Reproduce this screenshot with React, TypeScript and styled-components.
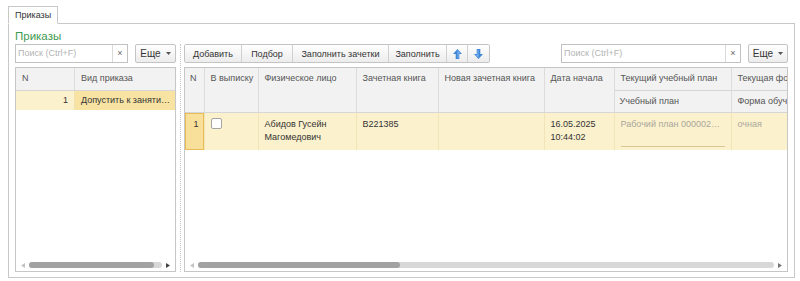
import styled, { createGlobalStyle } from 'styled-components'

const GlobalStyle = createGlobalStyle`
  body {
    margin: 0;
    background: #ffffff;
    font-family: 'Liberation Sans', Arial, sans-serif;
    font-size: 9px;
    color: #333333;
  }
`

type Column = { title: string; sub?: string; width: number }

const columns: Column[] = [
  { title: 'N', width: 19 },
  { title: 'В выписку', width: 54 },
  { title: 'Физическое лицо', width: 98 },
  { title: 'Зачетная книга', width: 82 },
  { title: 'Новая зачетная книга', width: 106 },
  { title: 'Дата начала', width: 70 },
  { title: 'Текущий учебный план', sub: 'Учебный план', width: 117 },
  { title: 'Текущая форма обучения', sub: 'Форма обучения', width: 110 }
]

function Caret() {
  return (
    <svg width="5" height="3" viewBox="0 0 5 3">
      <path d="M0 0h5L2.5 3z" fill="#555" />
    </svg>
  )
}

function MoveArrow({ down }: { down?: boolean }) {
  return (
    <svg
      width="9"
      height="10"
      viewBox="0 0 9 10"
      style={down ? { transform: 'rotate(180deg)' } : undefined}
    >
      <path d="M4.5 0L9 5H6.3V10H2.7V5H0z" fill="#3d86d8" />
      <path d="M4.5 1.2L7.3 4.3H5.6V9.2H4.5z" fill="#7fb4ee" />
    </svg>
  )
}

function SearchBox({ width }: { width: number }) {
  return (
    <Search $width={width}>
      <SearchText>Поиск (Ctrl+F)</SearchText>
      <SearchClear>×</SearchClear>
    </Search>
  )
}

function MoreButton({ width }: { width: number }) {
  return (
    <More $width={width}>
      Еще
      <Caret />
    </More>
  )
}

function ScrollBar({ thumb, rightDark }: { thumb: string; rightDark?: boolean }) {
  return (
    <Scroll>
      <svg width="4" height="5" viewBox="0 0 4 5">
        <path d="M4 0v5L0 2.5z" fill="#c4c4c4" />
      </svg>
      <Track>
        <Thumb style={{ width: thumb }} />
      </Track>
      <svg width="4" height="5" viewBox="0 0 4 5">
        <path d="M0 0v5L4 2.5z" fill={rightDark ? '#444' : '#777'} />
      </svg>
    </Scroll>
  )
}

export default function App() {
  return (
    <Page>
      <GlobalStyle />
      <TabBar>
        <Tab>Приказы</Tab>
      </TabBar>
      <Panel>
        <Title>Приказы</Title>
        <Split>
          <LeftPane>
            <Toolbar>
              <SearchBox width={113} />
              <MoreButton width={41} />
            </Toolbar>
            <Grid>
              <LeftHead>
                <HeadCell>N</HeadCell>
                <HeadCell $last>Вид приказа</HeadCell>
              </LeftHead>
              <LeftRow>
                <NumCell>1</NumCell>
                <KindCell>Допустить к занятиям</KindCell>
              </LeftRow>
              <Filler />
              <ScrollBar thumb="94%" rightDark />
            </Grid>
          </LeftPane>
          <Divider />
          <RightPane>
            <Toolbar>
              <ButtonGroup>
                <GroupButton $width={56}>Добавить</GroupButton>
                <GroupButton $width={51}>Подбор</GroupButton>
                <GroupButton $width={96}>Заполнить зачетки</GroupButton>
                <GroupButton $width={58}>Заполнить</GroupButton>
                <GroupButton $width={21}>
                  <MoveArrow />
                </GroupButton>
                <GroupButton $width={22}>
                  <MoveArrow down />
                </GroupButton>
              </ButtonGroup>
              <Spacer />
              <SearchBox width={180} />
              <MoreButton width={40} />
            </Toolbar>
            <Grid>
              <TableClip>
                <Table>
                  <colgroup>
                    {columns.map((c) => (
                      <col key={c.title} style={{ width: c.width }} />
                    ))}
                  </colgroup>
                  <thead>
                    <tr>
                      {columns.map((c) => (
                        <Th key={c.title} rowSpan={c.sub ? 1 : 2} $tall={!c.sub}>
                          {c.title}
                        </Th>
                      ))}
                    </tr>
                    <tr>
                      {columns
                        .filter((c) => c.sub)
                        .map((c) => (
                          <Th key={c.title} $tall={false}>
                            {c.sub}
                          </Th>
                        ))}
                    </tr>
                  </thead>
                  <tbody>
                    <tr>
                      <NumTd>1</NumTd>
                      <Td>
                        <Check />
                      </Td>
                      <Td>
                        Абидов Гусейн
                        <br />
                        Магомедович
                      </Td>
                      <Td>В221385</Td>
                      <Td />
                      <Td>
                        16.05.2025
                        <br />
                        10:44:02
                      </Td>
                      <Td>
                        <Field>Рабочий план 000002345678</Field>
                      </Td>
                      <Td>
                        <Muted>очная</Muted>
                      </Td>
                    </tr>
                  </tbody>
                </Table>
              </TableClip>
              <ScrollBar thumb="35%" />
            </Grid>
          </RightPane>
        </Split>
      </Panel>
    </Page>
  )
}

const Page = styled.div`
  width: 787px;
  padding: 6px 5px 0 8px;
`

const TabBar = styled.div`
  display: flex;
  height: 18px;
`

const Tab = styled.div`
  position: relative;
  z-index: 1;
  height: 18px;
  padding: 0 6px;
  line-height: 17px;
  border: 1px solid #c8c8c8;
  border-bottom: 1px solid #ffffff;
  background: #ffffff;
  box-sizing: border-box;
  color: #333;
`

const Panel = styled.div`
  box-sizing: border-box;
  height: 255px;
  margin-top: -1px;
  border: 1px solid #c8c8c8;
  padding: 5px 6px 5px 6px;
  display: flex;
  flex-direction: column;
`

const Title = styled.div`
  height: 14px;
  line-height: 14px;
  font-size: 11.5px;
  color: #3f9b52;
`

const Split = styled.div`
  flex: 1;
  margin-top: 1px;
  display: flex;
  min-height: 0;
`

const LeftPane = styled.div`
  width: 161px;
  display: flex;
  flex-direction: column;
  gap: 4px;
`

const Divider = styled.div`
  width: 8px;
  display: flex;
  justify-content: center;
  &::after {
    content: '';
    border-left: 1px dotted #c4c4c4;
  }
`

const RightPane = styled.div`
  flex: 1;
  min-width: 0;
  display: flex;
  flex-direction: column;
  gap: 4px;
`

const Toolbar = styled.div`
  height: 19px;
  display: flex;
  gap: 7px;
`

const Spacer = styled.div`
  flex: 1;
`

const Search = styled.div<{ $width: number }>`
  box-sizing: border-box;
  width: ${(p) => p.$width}px;
  height: 19px;
  display: flex;
  border: 1px solid #c2c2c2;
  background: #ffffff;
`

const SearchText = styled.div`
  flex: 1;
  padding-left: 2px;
  line-height: 17px;
  color: #b4b4b4;
`

const SearchClear = styled.div`
  width: 14px;
  border-left: 1px solid #dadada;
  text-align: center;
  line-height: 16px;
  color: #666;
`

const buttonFace = `
  box-sizing: border-box;
  height: 19px;
  display: flex;
  align-items: center;
  justify-content: center;
  background: linear-gradient(#ffffff, #ececec);
  color: #333;
`

const More = styled.div<{ $width: number }>`
  ${buttonFace}
  width: ${(p) => p.$width}px;
  gap: 5px;
  border: 1px solid #c4c4c4;
  border-radius: 2px;
  font-size: 10px;
`

const ButtonGroup = styled.div`
  display: flex;
  border: 1px solid #c4c4c4;
  border-radius: 2px;
  box-sizing: border-box;
  height: 19px;
  overflow: hidden;
`

const GroupButton = styled.div<{ $width: number }>`
  ${buttonFace}
  height: 17px;
  width: ${(p) => p.$width}px;
  & + & {
    border-left: 1px solid #d0d0d0;
  }
`

const Grid = styled.div`
  flex: 1;
  min-height: 0;
  box-sizing: border-box;
  border: 1px solid #c6c6c6;
  display: flex;
  flex-direction: column;
  overflow: hidden;
`

const LeftHead = styled.div`
  display: grid;
  grid-template-columns: 59px 1fr;
  height: 22px;
  background: #f2f2f2;
  border-bottom: 1px solid #d6d6d6;
`

const HeadCell = styled.div<{ $last?: boolean }>`
  padding: 5px 6px 0;
  color: #555;
  border-right: ${(p) => (p.$last ? 'none' : '1px solid #dcdcdc')};
`

const LeftRow = styled.div`
  display: grid;
  grid-template-columns: 59px 1fr;
  height: 19px;
  background: #fbf1cd;
`

const NumCell = styled.div`
  padding: 4px 6px 0;
  text-align: right;
  border-right: 1px solid #efe2b0;
`

const KindCell = styled.div`
  padding: 4px 4px 0 6px;
  background: #f8e3a3;
  white-space: nowrap;
  overflow: hidden;
  text-overflow: ellipsis;
`

const Filler = styled.div`
  flex: 1;
`

const TableClip = styled.div`
  flex: 1;
  overflow: hidden;
`

const Table = styled.table`
  table-layout: fixed;
  width: 656px;
  border-collapse: collapse;
  font-size: 9px;
`

const Th = styled.th<{ $tall: boolean }>`
  height: ${(p) => (p.$tall ? 44 : 22)}px;
  padding: 5px 6px 0;
  vertical-align: top;
  text-align: left;
  font-weight: normal;
  color: #555;
  white-space: nowrap;
  overflow: hidden;
  box-sizing: border-box;
  background: #f2f2f2;
  border-right: 1px solid #dcdcdc;
  border-bottom: 1px solid #d6d6d6;
  &:first-child {
    padding-left: 5px;
  }
`

const Td = styled.td`
  height: 38px;
  box-sizing: border-box;
  padding: 5px 6px 0;
  vertical-align: top;
  line-height: 13px;
  color: #333;
  background: #fbf1cd;
  border-right: 1px solid #f0e4b8;
  white-space: nowrap;
  overflow: hidden;
`

const NumTd = styled(Td)`
  padding: 5px 5px 0 0;
  text-align: right;
  background: #f8e09a;
  box-shadow: inset 0 0 0 1px #e8bd55;
`

const Check = styled.div`
  width: 11px;
  height: 11px;
  box-sizing: border-box;
  border: 1px solid #a4a4a4;
  border-radius: 2px;
  background: #ffffff;
`

const Field = styled.div`
  height: 29px;
  color: #aaa79c;
  overflow: hidden;
  text-overflow: ellipsis;
  white-space: nowrap;
  border-bottom: 1px solid #d8c694;
  box-sizing: border-box;
`

const Muted = styled.span`
  color: #aaa79c;
`

const Scroll = styled.div`
  height: 12px;
  display: flex;
  align-items: center;
  gap: 4px;
  padding: 0 5px;
  flex-shrink: 0;
`

const Track = styled.div`
  flex: 1;
  height: 6px;
  border-radius: 3px;
  background: #d8d8d8;
`

const Thumb = styled.div`
  height: 6px;
  border-radius: 3px;
  background: #a2a2a2;
`
